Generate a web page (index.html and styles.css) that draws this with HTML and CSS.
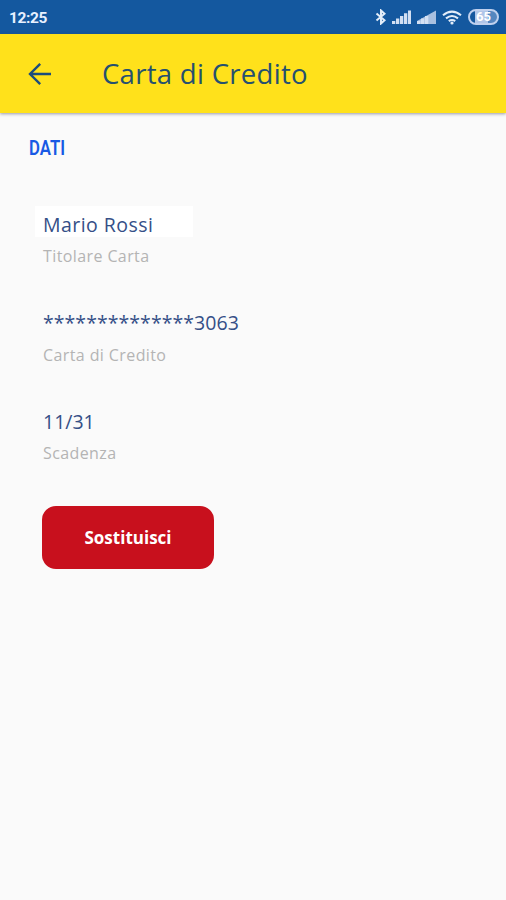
FILE: index.html
```html
<!DOCTYPE html>
<html lang="it">
<head>
<meta charset="utf-8">
<title>Carta di Credito</title>
<link rel="stylesheet" href="styles.css">
</head>
<body>
<div class="status">
  <span class="clock">12:25</span>
  <div class="indicators">
    <svg class="bluetooth" width="12" height="16" viewBox="0 0 12 16"><path d="M1.5 4.5 9.5 11.3 6 14.5V1.5L9.5 4.7 1.5 11.5"/></svg>
    <svg class="signal" width="19" height="14" viewBox="0 0 19 14"><path class="full" d="M0 11h3.3v3H0zM4 8.6h3.3V14H4zM8 6h3.3v8H8zM12 3.3h3.3V14H12zM16 .6h3V14h-3z"/></svg>
    <svg class="signal" width="19" height="14" viewBox="0 0 19 14"><path class="weak" d="M0 14V11L19 .5V14z"/><path class="full" d="M0 11h3.3v3H0zM4 8.6h3.3V14H4zM8 6h3.3v8H8z"/></svg>
    <svg class="wifi" width="20" height="15" viewBox="0 0 20 15"><path d="M1 5.2Q10-2 19 5.2M4 8.4Q10 3.6 16 8.4M6.8 11.2Q10 8.8 13.2 11.2"/><circle cx="10" cy="13" r="1.6"/></svg>
    <span class="battery">65</span>
  </div>
</div>
<header class="appbar">
  <svg class="back" width="24" height="24" viewBox="0 0 24 24"><path d="M23 12H2M12.2 1.8 2 12l10.2 10.2"/></svg>
  <h1>Carta di Credito</h1>
</header>
<main>
  <h2>DATI</h2>
  <div class="field">
    <div class="value holder">Mario Rossi</div>
    <div class="label">Titolare Carta</div>
  </div>
  <div class="field">
    <div class="value number">**************3063</div>
    <div class="label">Carta di Credito</div>
  </div>
  <div class="field">
    <div class="value">11/31</div>
    <div class="label">Scadenza</div>
  </div>
  <button>Sostituisci</button>
</main>
</body>
</html>
```
FILE: styles.css
```css
* { box-sizing: border-box; }
body {
  margin: 0;
  min-height: 900px;
  background: #fafafa;
  font-family: "Open Sans", sans-serif;
}
.status {
  height: 34px;
  padding: 0 7px 0 9px;
  background: #14589f;
  display: flex;
  align-items: center;
  justify-content: space-between;
}
.clock {
  font: 700 15.5px/34px Roboto, sans-serif;
  letter-spacing: -.4px;
  padding-top: 2px;
  color: #e8f1ff;
}
.indicators { display: flex; align-items: center; }
.indicators svg { display: block; }
.bluetooth path { fill: none; stroke: #e3edf9; stroke-width: 2; }
.signal { margin-left: 6px; }
.bluetooth + .signal { margin-left: 5px; }
.full { fill: #d3e0f3; }
.weak { fill: #a9c0e0; }
.wifi { margin: 0 6px; }
.wifi path { fill: none; stroke: #e3edf9; stroke-width: 2.1; }
.wifi circle { fill: #e3edf9; }
.battery {
  width: 31px;
  height: 16px;
  border: 2px solid #bfd0ee;
  border-radius: 8px;
  background: linear-gradient(90deg, #14589f 18%, #b0c5e8 18% 65%, #5586bf 65%);
  color: #fff;
  font: 700 13px/12px Roboto, sans-serif;
  text-align: center;
}
.appbar {
  height: 79px;
  padding-left: 28px;
  background: #ffe11b;
  box-shadow: 0 1px 3px rgba(60, 60, 90, .5);
  display: flex;
  align-items: center;
}
.back path { fill: none; stroke: #1c4c7c; stroke-width: 2.4; }
h1 {
  margin: 1px 0 0 50px;
  font-size: 27.5px;
  font-weight: 400;
  letter-spacing: .3px;
  line-height: 40px;
  color: #25506f;
  white-space: nowrap;
}
main { padding: 24px 29px; }
h2 {
  margin: 0;
  font: 600 19.5px/24px Roboto, sans-serif;
  color: #1859e4;
  transform: scaleX(.86);
  transform-origin: left;
}
.field { margin-left: 6px; height: 98.5px; }
h2 + .field { margin-top: 45px; }
.value {
  width: max-content;
  height: 31px;
  padding-left: 8px;
  font-size: 19.5px;
  line-height: 37px;
  color: #354f87;
}
.holder { width: 158px; background: #fff; letter-spacing: .45px; }
.number { letter-spacing: .05px; line-height: 36px; }
.label {
  width: max-content;
  margin-left: 8px;
  font-size: 16px;
  letter-spacing: .4px;
  line-height: 39px;
  color: #b4b4b4;
}
button {
  display: block;
  width: 172px;
  height: 63px;
  margin: 4.5px 0 0 13px;
  padding: 0;
  border: 0;
  border-radius: 14px;
  background: #c8101d;
  color: #fff;
  font: 700 17px/63px "Open Sans", sans-serif;
}
```
